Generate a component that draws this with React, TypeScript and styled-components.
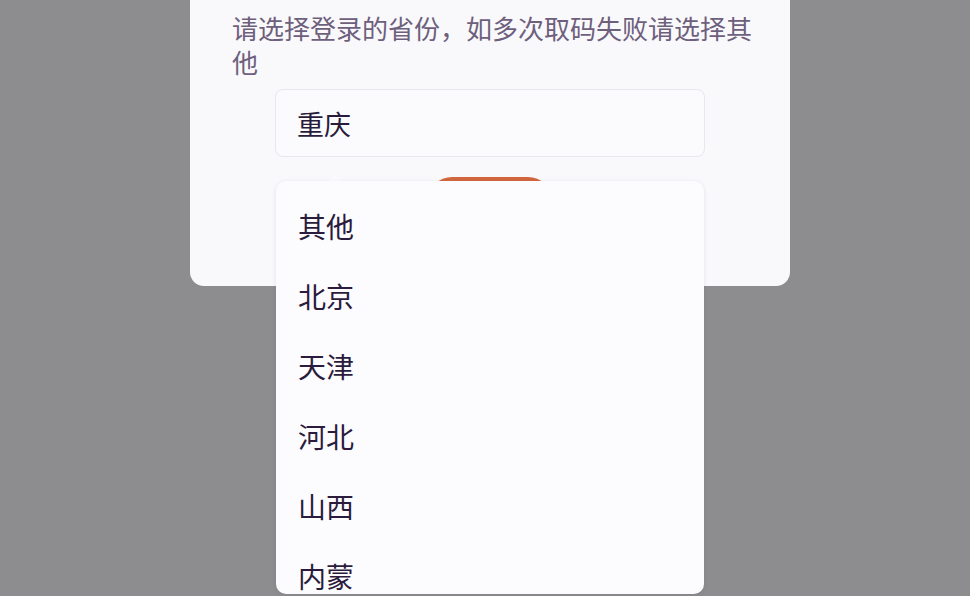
import styled, { createGlobalStyle } from 'styled-components';

const provinces = ['其他', '北京', '天津', '河北', '山西', '内蒙'];

const GlobalStyle = createGlobalStyle`
  html, body {
    margin: 0;
    padding: 0;
    height: 100%;
    overflow: hidden;
    background: #8d8d8f;
    font-family: "Noto Sans CJK SC", "Noto Sans", sans-serif;
  }
`;

const Page = styled.div`
  position: relative;
  width: 970px;
  height: 596px;
  overflow: hidden;
`;

const Card = styled.div`
  width: 600px;
  margin: -30px 0 0 190px;
  padding: 41px 0 61px 42px;
  box-sizing: border-box;
  background: #f9f9fc;
  border-radius: 14px;
`;

const Hint = styled.p`
  margin: 0;
  width: 522px;
  font-size: 26px;
  line-height: 34px;
  color: #6e5f7c;
`;

const Select = styled.div`
  display: flex;
  align-items: center;
  width: 430px;
  height: 68px;
  margin: 10px 0 0 43px;
  padding: 0 21px;
  box-sizing: border-box;
  background: #fbfbfd;
  border: 1px solid #e7e7ed;
  border-radius: 8px;
  font-size: 27px;
  color: #2a1b3b;
`;

const Submit = styled.button`
  display: block;
  width: 124px;
  height: 48px;
  margin: 20px 0 0 196px;
  border: none;
  border-radius: 24px;
  background: #d2673e;
  color: #fff;
  font-family: inherit;
  font-size: 20px;
`;

const Dropdown = styled.ul`
  position: absolute;
  left: 276px;
  top: 181px;
  width: 428px;
  height: 413px;
  margin: 0;
  padding: 10px 0 0;
  box-sizing: border-box;
  list-style: none;
  background: #fcfcff;
  border-radius: 10px;
  box-shadow: 0 1px 4px rgba(60, 60, 80, 0.12);
  overflow: hidden;
`;

const Arrow = styled.div`
  position: absolute;
  left: 328px;
  top: 175px;
  width: 0;
  height: 0;
  border-left: 7px solid transparent;
  border-right: 7px solid transparent;
  border-bottom: 7px solid #fcfcff;
`;

const Option = styled.li`
  height: 70px;
  padding-left: 22px;
  display: flex;
  align-items: center;
  font-size: 28px;
  color: #2b1b3d;
`;

export default function App() {
  return (
    <Page>
      <GlobalStyle />
      <Card>
        <Hint>请选择登录的省份，如多次取码失败请选择其他</Hint>
        <Select>重庆</Select>
        <Submit>确定</Submit>
      </Card>
      <Arrow />
      <Dropdown>
        {provinces.map((p) => (
          <Option key={p}>{p}</Option>
        ))}
      </Dropdown>
    </Page>
  );
}
